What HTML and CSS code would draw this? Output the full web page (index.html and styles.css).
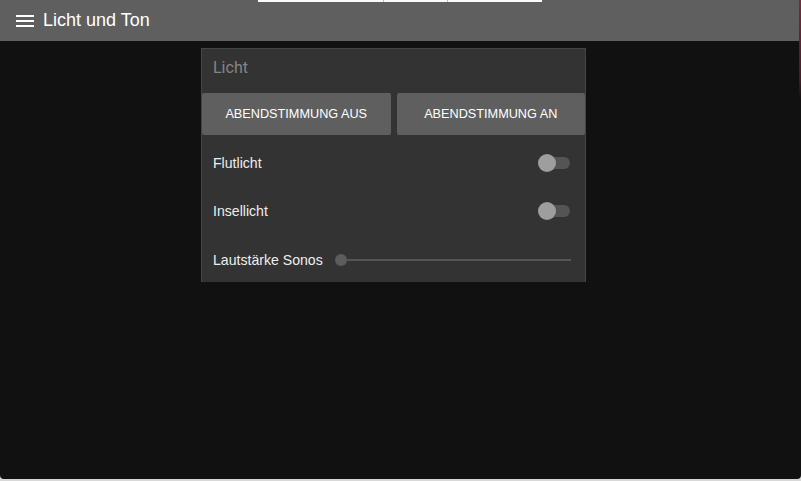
FILE: index.html
```html
<!DOCTYPE html>
<html lang="de">
<head>
  <meta charset="UTF-8" />
  <meta name="viewport" content="width=device-width, initial-scale=1.0" />
  <title>Licht und Ton</title>
  <link rel="stylesheet" href="styles.css">
</head>
<body>
  <div class="window">
    <header class="toolbar">
      <svg class="menu-icon" width="18" height="12" viewBox="0 0 18 12">
        <rect x="0" y="0" width="18" height="2" fill="#fff"/>
        <rect x="0" y="5" width="18" height="2" fill="#fff"/>
        <rect x="0" y="10" width="18" height="2" fill="#fff"/>
      </svg>
      <span class="title">Licht und Ton</span>
      <div class="tabs-strip">
        <span></span><span></span><span></span>
      </div>
    </header>
    <div class="edge-mark"></div>

    <main class="content">
      <section class="card">
        <div class="card-title">Licht</div>
        <div class="button-row">
          <button class="btn">Abendstimmung aus</button>
          <button class="btn">Abendstimmung an</button>
        </div>
        <div class="row">
          <span class="label">Flutlicht</span>
          <div class="switch"><div class="switch-thumb"></div></div>
        </div>
        <div class="row">
          <span class="label">Insellicht</span>
          <div class="switch"><div class="switch-thumb"></div></div>
        </div>
        <div class="row slider-row">
          <span class="label">Lautstärke Sonos</span>
          <div class="slider">
            <div class="slider-thumb"></div>
            <div class="slider-track"></div>
          </div>
        </div>
      </section>
    </main>
  </div>
</body>
</html>
```

FILE: styles.css
```css
html, body {
  margin: 0;
  height: 100%;
}

body {
  background: #d8d8d8;
  font-family: Roboto, 'Liberation Sans', Arial, sans-serif;
}

.window {
  position: relative;
  height: 479px;
  background: #111111;
  border-radius: 0 0 4px 4px;
  overflow: hidden;
  display: flex;
  flex-direction: column;
}

.toolbar {
  position: relative;
  height: 41px;
  flex: none;
  background: #5f5f5f;
  display: flex;
  align-items: center;
  padding-left: 16px;
  gap: 9px;
  color: #fff;
}

.menu-icon {
  display: block;
  margin-top: 1px;
}

.title {
  font-size: 18px;
  font-family: 'Liberation Sans', Arial, sans-serif;
}

/* strip of a popup peeking in over the toolbar */
.tabs-strip {
  position: absolute;
  left: 258px;
  top: 0;
  width: 284px;
  height: 2px;
  background: #fafafa;
  display: flex;
}

.tabs-strip span {
  border-right: 1px solid #bbb;
}

.tabs-strip span:nth-child(1) { width: 125px; }
.tabs-strip span:nth-child(2) { width: 63px; }
.tabs-strip span:nth-child(3) { flex: 1; border-right: none; }

.edge-mark {
  position: absolute;
  right: 0;
  top: 0;
  width: 2px;
  height: 100px;
  background: linear-gradient(#7a2a3c, #4a1a26 80%, transparent);
}

.content {
  flex: 1;
  padding: 7px 0 0 201px;
}

.card {
  width: 383px;
  height: 233px;
  background: #333333;
  border: 1px solid #454545;
  border-bottom: none;
}

.card-title {
  height: 44px;
  line-height: 38px;
  padding-left: 11px;
  font-size: 16px;
  color: #858585;
}

.button-row {
  display: flex;
  gap: 6px;
}

.btn {
  flex: 1;
  height: 42px;
  border: none;
  border-radius: 2px;
  background: #5f5f5f;
  color: #fff;
  font-family: 'Liberation Sans', Arial, sans-serif;
  font-size: 12.7px;
  text-transform: uppercase;
  padding: 0;
}

.row {
  height: 48px;
  display: flex;
  align-items: center;
  padding: 0 15px 0 11px;
  justify-content: space-between;
}

.button-row + .row {
  margin-top: 4px;
}

.label {
  font-size: 14.1px;
  color: #eeeeee;
  font-family: 'Liberation Sans', Arial, sans-serif;
}

.switch {
  position: relative;
  width: 30px;
  height: 12px;
  border-radius: 6px;
  background: #545454;
}

.switch-thumb {
  position: absolute;
  left: -2px;
  top: -3px;
  width: 18px;
  height: 18px;
  border-radius: 50%;
  background: #9e9e9e;
}

.slider-row {
  justify-content: flex-start;
  gap: 12px;
  padding-top: 1px;
  padding-right: 14px;
}

.slider {
  flex: 1;
  display: flex;
  align-items: center;
}

.slider-thumb {
  width: 12px;
  height: 12px;
  border-radius: 50%;
  background: #5c5c5c;
  flex: none;
}

.slider-track {
  flex: 1;
  height: 2px;
  background: #555555;
}
```
